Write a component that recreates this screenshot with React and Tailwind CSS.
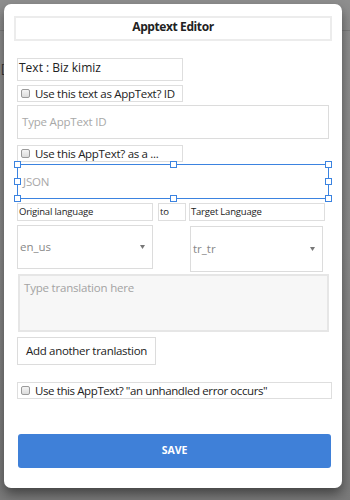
import React from "react";

function Check() {
  return (
    <span className="inline-block w-[9px] h-[9px] rounded-[2px] border border-[#9a9a9a] bg-gradient-to-b from-[#f4f4f4] to-[#dcdcdc] mr-[5px] shrink-0" />
  );
}

function Handle({ cls }) {
  return <span className={"absolute w-[7px] h-[7px] bg-white border border-[#3b83e0] " + cls} />;
}

function Arrow() {
  return (
    <svg width="5" height="4" viewBox="0 0 5 4" className="shrink-0">
      <path d="M0 0 L5 0 L2.5 4 Z" fill="#777" />
    </svg>
  );
}

export default function App() {
  return (
    <div
      className="relative w-[350px] h-[500px] overflow-hidden bg-gradient-to-b from-[#8e8e8e] via-[#8a8a8a] to-[#7a7a7a]"
      style={{ fontFamily: '"Open Sans", "Noto Sans", sans-serif' }}
    >
      <div className="absolute left-0 right-0 top-[30px] h-px bg-[#7c7c7c]" />
      <div className="absolute left-[1px] top-[62px] text-[12px] leading-[14px] text-[#333]">[</div>
      <div className="absolute left-[4px] top-[4px] w-[338px] h-[484px] rounded-[7px] bg-white shadow-[0_6px_12px_rgba(0,0,0,0.45)] flex flex-col px-[13px]">
        <div className="mt-[12px] -mx-[3px] w-[318px] h-[25px] border-2 border-[#ececec] text-center font-bold text-[12px] tracking-[-0.4px] leading-[16px] text-[#222] pt-[1px]">
          Apptext Editor
        </div>

        <div className="mt-[17px] w-[166px] h-[23px] border border-[#dedede] text-[12px] leading-[16px] text-[#222] px-[1px] pt-[1px] whitespace-nowrap">
          Text : Biz kimiz
        </div>

        <div className="mt-[4px] w-[166px] h-[17px] border border-[#dedede] flex items-center pl-[3px] text-[11.5px] tracking-[-0.3px] text-[#222] whitespace-nowrap">
          <Check />
          <span className="leading-[15px]">Use this text as AppText? ID</span>
        </div>

        <div className="mt-[3px] w-[312px] h-[34px] border border-[#dcdcdc] flex items-center px-[4px] text-[11.5px] tracking-[-0.2px] text-[#a8a8a8]">
          Type AppText ID
        </div>

        <div className="mt-[6px] w-[166px] h-[17px] border border-[#dedede] flex items-center pl-[3px] text-[11.5px] tracking-[-0.3px] text-[#222] whitespace-nowrap">
          <Check />
          <span className="leading-[15px]">Use this AppText? as a ...</span>
        </div>

        <div className="relative mt-[2px] w-[312px] h-[35px] border border-[#3b83e0] flex items-center pl-[5px] text-[11.5px] tracking-[-0.2px] text-[#a8a8a8]">
          JSON
          <Handle cls="-left-[4px] -top-[4px]" />
          <Handle cls="left-[152px] -top-[4px]" />
          <Handle cls="-right-[4px] -top-[4px]" />
          <Handle cls="-left-[4px] top-[13px]" />
          <Handle cls="-right-[4px] top-[13px]" />
          <Handle cls="-left-[4px] -bottom-[4px]" />
          <Handle cls="left-[152px] -bottom-[4px]" />
          <Handle cls="-right-[4px] -bottom-[4px]" />
        </div>

        <div className="mt-[4px] flex h-[18px] text-[9.5px] tracking-[-0.2px] text-[#222] whitespace-nowrap">
          <div className="w-[136px] border border-[#dedede] flex items-center px-[1px] leading-[12px]">Original language</div>
          <div className="ml-[5px] w-[28px] border border-[#dedede] flex items-center px-[1px] leading-[12px]">to</div>
          <div className="ml-[3px] w-[136px] border border-[#dedede] flex items-center px-[1px] leading-[12px]">Target Language</div>
        </div>

        <div className="mt-[4px] flex items-start">
          <div className="w-[136px] h-[44px] border border-[#dcdcdc] flex items-center justify-between pl-[2px] pr-[7px] text-[11.5px] text-[#888]">
            <span>en_us</span>
            <Arrow />
          </div>
          <div className="ml-[37px] mt-[1px] w-[133px] h-[46px] border border-[#dcdcdc] flex items-center justify-between pl-[2px] pr-[7px] text-[11.5px] text-[#888]">
            <span>tr_tr</span>
            <Arrow />
          </div>
        </div>

        <div className="mt-[2px] ml-[1px] w-[311px] h-[58px] border-2 border-[#e6e6e6] bg-[#f7f7f7] px-[4px] pt-[4px] text-[11.5px] tracking-[-0.2px] leading-[16px] text-[#a3a3a3]">
          Type translation here
        </div>

        <div className="mt-[5px] w-[139px] h-[28px] border border-[#dcdcdc] flex items-center justify-center text-[11.5px] tracking-[-0.3px] font-medium text-[#222] whitespace-nowrap">
          Add another tranlastion
        </div>

        <div className="mt-[17px] w-[315px] h-[17px] border border-[#dedede] flex items-center pl-[3px] text-[11.5px] tracking-[-0.4px] text-[#222] whitespace-nowrap">
          <Check />
          <span className="leading-[15px]">Use this AppText? "an unhandled error occurs"</span>
        </div>

        <div className="mt-[35px] ml-[1px] w-[313px] h-[34px] rounded-[3px] bg-[#3f80d8] flex items-center justify-center text-white font-bold text-[10.5px]">
          SAVE
        </div>
      </div>
    </div>
  );
}
